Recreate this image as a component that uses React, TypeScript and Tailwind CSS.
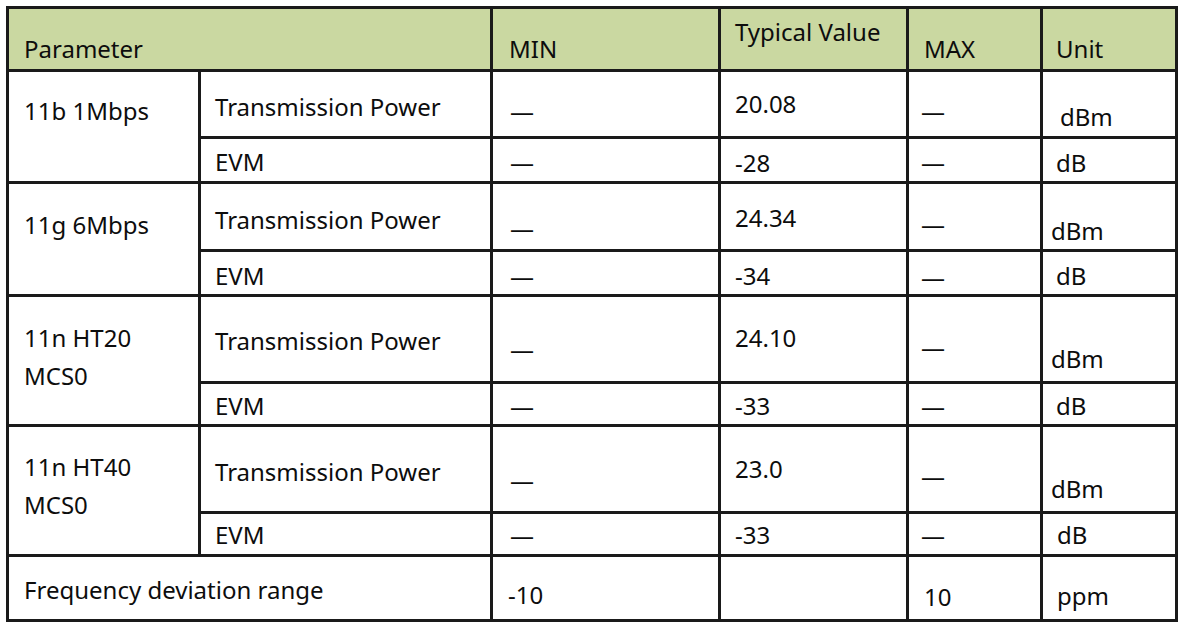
import React from "react";

type CellProps = {
  className?: string;
  children?: React.ReactNode;
};

const Cell = ({ className = "", children }: CellProps) => (
  <div className={`bg-white text-[24px] leading-[24px] text-[#0d0d0d] whitespace-nowrap ${className}`}>
    {children}
  </div>
);

const Head = ({ className = "", children }: CellProps) => (
  <div className={`bg-[#cad8a1] text-[24px] leading-[24px] text-[#0d0d0d] whitespace-nowrap ${className}`}>
    {children}
  </div>
);

export default function App() {
  return (
    <div className="min-h-screen bg-white pt-[6px] pl-[6px]" style={{ fontFamily: '"Noto Sans", "Open Sans", sans-serif' }}>
      <div className="grid w-fit grid-cols-[189px_289px_225px_185px_131px_132px] grid-rows-[60px_64px_42px_65px_42px_84px_40px_84px_40px_62px] gap-[3px] bg-[#1a1a1a] p-[3px]">
        {/* header */}
        <Head className="col-span-2 pl-[15px] pt-[28px]">Parameter</Head>
        <Head className="pl-[16px] pt-[28px]">MIN</Head>
        <Head className="pl-[14px] pt-[11px]">Typical Value</Head>
        <Head className="pl-[15px] pt-[28px]">MAX</Head>
        <Head className="pl-[13px] pt-[28px]">Unit</Head>

        {/* 11b */}
        <Cell className="row-span-2 pl-[15px] pt-[27px]">11b 1Mbps</Cell>
        <Cell className="pl-[14px] pt-[23px]">Transmission Power</Cell>
        <Cell className="pl-[17px] pt-[27px]">—</Cell>
        <Cell className="pl-[14px] pt-[20px]">20.08</Cell>
        <Cell className="pl-[12px] pt-[27px]">—</Cell>
        <Cell className="pl-[17px] pt-[33px]">dBm</Cell>
        <Cell className="pl-[14px] pt-[11px]">EVM</Cell>
        <Cell className="pl-[17px] pt-[11px]">—</Cell>
        <Cell className="pl-[14px] pt-[12px]">-28</Cell>
        <Cell className="pl-[12px] pt-[11px]">—</Cell>
        <Cell className="pl-[13px] pt-[12px]">dB</Cell>

        {/* 11g */}
        <Cell className="row-span-2 pl-[15px] pt-[29px]">11g 6Mbps</Cell>
        <Cell className="pl-[14px] pt-[24px]">Transmission Power</Cell>
        <Cell className="pl-[17px] pt-[32px]">—</Cell>
        <Cell className="pl-[14px] pt-[22px]">24.34</Cell>
        <Cell className="pl-[12px] pt-[28px]">—</Cell>
        <Cell className="pl-[8px] pt-[35px]">dBm</Cell>
        <Cell className="pl-[14px] pt-[12px]">EVM</Cell>
        <Cell className="pl-[17px] pt-[12px]">—</Cell>
        <Cell className="pl-[14px] pt-[12px]">-34</Cell>
        <Cell className="pl-[12px] pt-[13px]">—</Cell>
        <Cell className="pl-[13px] pt-[12px]">dB</Cell>

        {/* 11n HT20 */}
        <Cell className="row-span-2 pl-[15px] pt-[22px] leading-[38px] whitespace-normal">
          11n HT20
          <br />
          MCS0
        </Cell>
        <Cell className="pl-[14px] pt-[32px]">Transmission Power</Cell>
        <Cell className="pl-[17px] pt-[40px]">—</Cell>
        <Cell className="pl-[14px] pt-[29px]">24.10</Cell>
        <Cell className="pl-[12px] pt-[38px]">—</Cell>
        <Cell className="pl-[8px] pt-[50px]">dBm</Cell>
        <Cell className="pl-[14px] pt-[10px]">EVM</Cell>
        <Cell className="pl-[17px] pt-[10px]">—</Cell>
        <Cell className="pl-[14px] pt-[10px]">-33</Cell>
        <Cell className="pl-[12px] pt-[10px]">—</Cell>
        <Cell className="pl-[13px] pt-[10px]">dB</Cell>

        {/* 11n HT40 */}
        <Cell className="row-span-2 pl-[15px] pt-[21px] leading-[38px] whitespace-normal">
          11n HT40
          <br />
          MCS0
        </Cell>
        <Cell className="pl-[14px] pt-[33px]">Transmission Power</Cell>
        <Cell className="pl-[17px] pt-[41px]">—</Cell>
        <Cell className="pl-[14px] pt-[30px]">23.0</Cell>
        <Cell className="pl-[12px] pt-[37px]">—</Cell>
        <Cell className="pl-[8px] pt-[50px]">dBm</Cell>
        <Cell className="pl-[14px] pt-[9px]">EVM</Cell>
        <Cell className="pl-[17px] pt-[9px]">—</Cell>
        <Cell className="pl-[14px] pt-[9px]">-33</Cell>
        <Cell className="pl-[12px] pt-[9px]">—</Cell>
        <Cell className="pl-[14px] pt-[9px]">dB</Cell>

        {/* frequency */}
        <Cell className="col-span-2 pl-[15px] pt-[21px]">Frequency deviation range</Cell>
        <Cell className="pl-[15px] pt-[26px]">-10</Cell>
        <Cell />
        <Cell className="pl-[15px] pt-[28px]">10</Cell>
        <Cell className="pl-[14px] pt-[27px]">ppm</Cell>
      </div>
    </div>
  );
}
